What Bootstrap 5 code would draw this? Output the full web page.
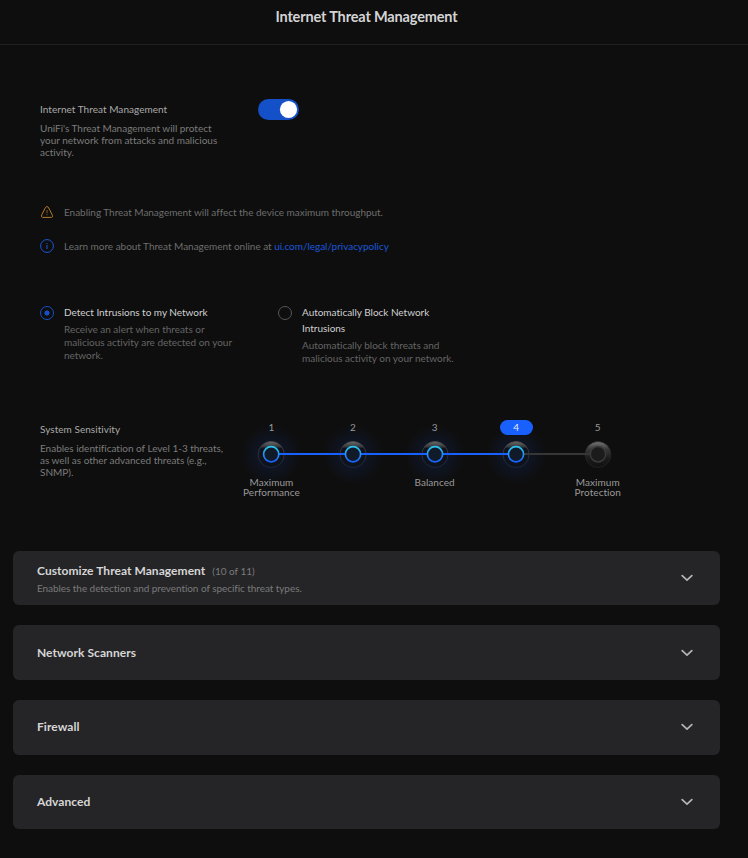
<!DOCTYPE html>
<html lang="en" data-bs-theme="dark">
<head>
<meta charset="utf-8">
<meta name="viewport" content="width=device-width, initial-scale=1">
<title>Internet Threat Management</title>
<link href="https://cdn.jsdelivr.net/npm/bootstrap@5.3.0/dist/css/bootstrap.min.css" rel="stylesheet">
<style>
body{background:#0e0e0e;font-family:Lato,"Liberation Sans",sans-serif;font-size:10px;line-height:12px;color:#7b7b7b;height:858px;overflow:hidden;letter-spacing:-.02px}
.page-head{height:45px;border-bottom:1px solid #212122;padding:7px 15px 0 0}
.page-head h1{font-size:14.5px;line-height:20px;font-weight:700;color:#d4d4d4;margin:0;letter-spacing:-.15px}
.settings{padding:54px 0 0 40px;height:505.8px}
.label-col{width:218px}
.label-col p{width:186px;margin:7px 0 0}
.field-label{color:#a9a9a9;line-height:12px;letter-spacing:.04px}
.sense-label{margin-top:3px}
.form-switch .toggle{width:41px;height:21px;margin:0;border:0;background-size:21px 21px;background-color:#1450c8;box-shadow:none;--bs-form-switch-bg:url("data:image/svg+xml,%3csvg xmlns='http://www.w3.org/2000/svg' viewBox='-10.5 -10.5 21 21'%3e%3ccircle r='8.6' fill='%23fff'/%3e%3c/svg%3e")!important}
.form-switch .toggle:checked{background-color:#1450c8}
.intro{height:106px}
.notice{height:14px;gap:10px;color:#6d6d6d;letter-spacing:-.03px}
.notice a{color:#1a57da}
.notices{gap:20px;height:99px}
.choices{height:116px}
.choice{width:238px;gap:10px}
.choice-title{color:#d0d0d0;line-height:16px}
.choice-text{line-height:13px;margin-top:3px;color:#656565}
.choice .pick{width:14px;height:14px;margin:0;flex:none;background-color:transparent;border:1px solid #55555b;margin-top:1.5px}
.choice .pick:checked{border-color:#1450c8;--bs-form-check-bg-image:none;background-image:radial-gradient(circle,#1450c8 2.2px,transparent 2.9px)}
.scale{width:408px;margin-left:-27.4px;color:#9a9a9a;letter-spacing:.06px}
.scale-row>div{flex:1 0 0;text-align:center;line-height:10px}
.scale-row .num{line-height:15px}
.num .current{display:inline-block;width:33px;background:#1861ff;color:#e8eeff;border-radius:8px}
.track{display:block;overflow:visible;margin-bottom:2px}
.panels{padding:0 28px 0 13px;gap:20px}
.panel-box{height:54.6px;border-radius:6px;background:#252527;border:0;padding:0 27px 0 24px}
.panel-box h2{font-size:12px;line-height:16px;font-weight:700;color:#d6d6d6;margin:0;letter-spacing:.05px}
.panel-box .extra{color:#7a7a7b;letter-spacing:-.06px}
.panel-box .tally{font-size:10px;letter-spacing:-.03px}
.panel-box .details{margin-top:3px}
</style>
</head>
<body>
<header class="page-head text-center"><h1>Internet Threat Management</h1></header>
<main>
<section class="settings">
  <div class="intro d-flex">
    <div class="label-col">
      <label class="field-label d-block mt-1" for="itm">Internet Threat Management</label>
      <p>UniFi's Threat Management will protect your network from attacks and malicious activity.</p>
    </div>
    <div class="form-switch p-0 m-0 lh-1"><input class="form-check-input toggle" type="checkbox" role="switch" id="itm" checked></div>
  </div>
  <div class="notices d-flex flex-column">
    <div class="notice d-flex align-items-center">
      <svg width="14" height="14" viewBox="0 0 14 14" fill="none" stroke="#b37a2c" stroke-linecap="round"><path d="M5.700 2.200Q7 .7 8.300 2.200L12.400 10.200Q13.200 12.200 11.400 12.400H2.600Q.8 12.200 1.600 10.200Z"/><path d="M7 5.400v2.400M7 9.600v.2" stroke-opacity=".75"/></svg>
      <span>Enabling Threat Management will affect the device maximum throughput.</span>
    </div>
    <div class="notice d-flex align-items-center">
      <svg width="14" height="14" viewBox="0 0 14 14" fill="none" stroke="#1a57da"><circle cx="7" cy="7" r="6.4"/><path d="M7 6v4M7 4v1"/></svg>
      <span>Learn more about Threat Management online at <a class="text-decoration-none" href="#">ui.com/legal/privacypolicy</a></span>
    </div>
  </div>
  <div class="choices d-flex">
    <div class="choice d-flex">
      <input class="form-check-input pick" type="radio" name="mode" id="detect" checked>
      <div><label class="choice-title d-block" for="detect">Detect Intrusions to my Network</label><div class="choice-text">Receive an alert when threats or<br>malicious activity are detected on your<br>network.</div></div>
    </div>
    <div class="choice d-flex">
      <input class="form-check-input pick" type="radio" name="mode" id="block">
      <div><label class="choice-title d-block" for="block">Automatically Block Network<br>Intrusions</label><div class="choice-text">Automatically block threats and<br>malicious activity on your network.</div></div>
    </div>
  </div>
  <div class="d-flex">
    <div class="label-col">
      <div class="field-label sense-label">System Sensitivity</div>
      <p>Enables identification of Level 1-3 threats, as well as other advanced threats (e.g., SNMP).</p>
    </div>
    <div class="scale">
      <div class="scale-row d-flex"><div class="num">1</div><div class="num">2</div><div class="num">3</div><div class="num"><span class="current">4</span></div><div class="num">5</div></div>
      <svg class="track" width="408" height="40" viewBox="0 0 408 40">
        <defs>
          <radialGradient id="glow"><stop offset="0" stop-color="#1450e0" stop-opacity=".15"/><stop offset=".45" stop-color="#1450e0" stop-opacity=".1"/><stop offset="1" stop-color="#1450e0" stop-opacity="0"/></radialGradient>
          <linearGradient id="shine" x1="0" y1="0" x2="0" y2="1"><stop offset="0" stop-color="#6c6c6c"/><stop offset=".2" stop-color="#35373b"/><stop offset=".27" stop-color="#10131a"/><stop offset="1" stop-color="#0e121b"/></linearGradient>
          <linearGradient id="rim" x1="0" y1="0" x2="0" y2="1"><stop offset="0" stop-color="#4a4a4a"/><stop offset=".5" stop-color="#2e323b"/><stop offset="1" stop-color="#1b2642"/></linearGradient>
          <linearGradient id="ring" x1="0" y1="0" x2="0" y2="1"><stop offset="0" stop-color="#2bc7ee"/><stop offset="1" stop-color="#1861ff"/></linearGradient>
          <linearGradient id="shineOff" x1="0" y1="0" x2="0" y2="1"><stop offset="0" stop-color="#777"/><stop offset=".3" stop-color="#383838"/><stop offset=".65" stop-color="#1b1b1b"/><stop offset="1" stop-color="#101010"/></linearGradient>
          <g id="knob"><circle r="30" fill="url(#glow)"/><circle r="13" fill="url(#shine)" stroke="url(#rim)" stroke-width=".9"/></g>
          <circle id="dot" r="7.6" fill="#101a29" stroke="url(#ring)" stroke-width="1.7"/>
        </defs>
        <use href="#knob" x="40.2" y="19.5"/><use href="#knob" x="122" y="19.5"/><use href="#knob" x="204" y="19.5"/><use href="#knob" x="285" y="19.5"/>
        <circle cx="367" cy="19.5" r="13" fill="url(#shineOff)" stroke="#252525" stroke-width=".8"/>
        <path d="M41 19h244" stroke="#1861ff" stroke-width="2"/><path d="M286 19h74" stroke="#363636" stroke-width="2"/>
        <use href="#dot" x="40.2" y="19.2"/><use href="#dot" x="122" y="19.2"/><use href="#dot" x="204" y="19.2"/><use href="#dot" x="285" y="19.2"/>
        <circle cx="367" cy="19.2" r="7.7" fill="#1b1b1b" stroke="#3a3a3a" stroke-width="1.5"/>
      </svg>
      <div class="scale-row d-flex"><div>Maximum<br>Performance</div><div></div><div>Balanced</div><div></div><div>Maximum<br>Protection</div></div>
    </div>
  </div>
</section>
<section class="panels d-flex flex-column">
  <div class="panel-box d-flex align-items-center justify-content-between">
    <div><h2>Customize Threat Management <span class="extra tally fw-normal ms-1">(10 of 11)</span></h2><div class="extra details">Enables the detection and prevention of specific threat types.</div></div>
    <svg width="12" height="8" viewBox="0 0 12 8" fill="none" stroke="#b5b5b5" stroke-width="1.7" stroke-linecap="round" stroke-linejoin="round"><path d="M1.200 1.700 6 6.200l4.800-4.500"/></svg>
  </div>
  <div class="panel-box d-flex align-items-center justify-content-between"><h2>Network Scanners</h2><svg width="12" height="8" viewBox="0 0 12 8" fill="none" stroke="#b5b5b5" stroke-width="1.7" stroke-linecap="round" stroke-linejoin="round"><path d="M1.200 1.700 6 6.200l4.800-4.500"/></svg></div>
  <div class="panel-box d-flex align-items-center justify-content-between"><h2>Firewall</h2><svg width="12" height="8" viewBox="0 0 12 8" fill="none" stroke="#b5b5b5" stroke-width="1.7" stroke-linecap="round" stroke-linejoin="round"><path d="M1.200 1.700 6 6.200l4.800-4.500"/></svg></div>
  <div class="panel-box d-flex align-items-center justify-content-between"><h2>Advanced</h2><svg width="12" height="8" viewBox="0 0 12 8" fill="none" stroke="#b5b5b5" stroke-width="1.7" stroke-linecap="round" stroke-linejoin="round"><path d="M1.200 1.700 6 6.200l4.800-4.500"/></svg></div>
</section>
</main>
<script src="https://cdn.jsdelivr.net/npm/bootstrap@5.3.0/dist/js/bootstrap.bundle.min.js"></script>
</body>
</html>
